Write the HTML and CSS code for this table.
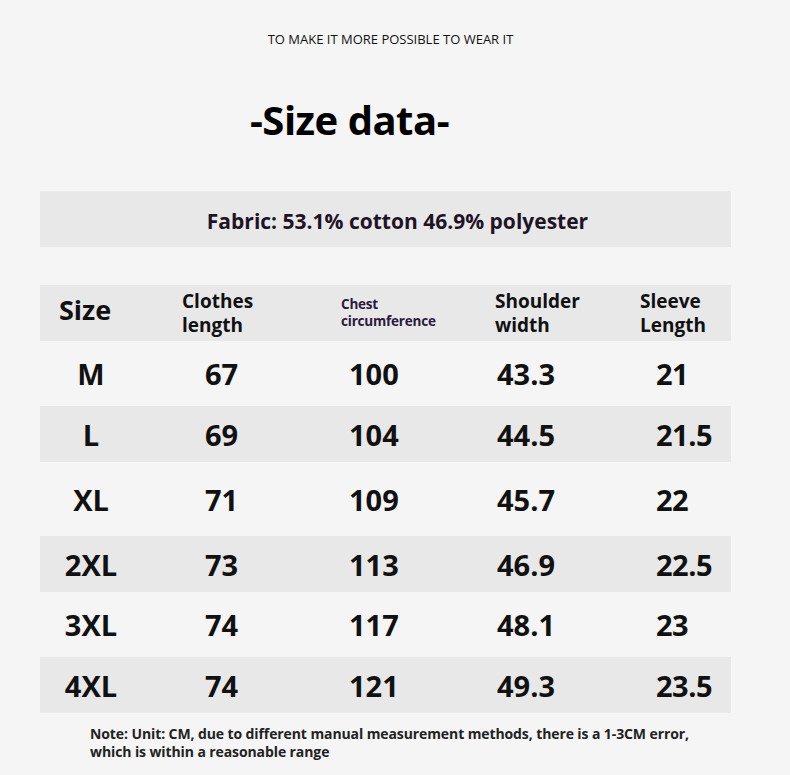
FILE: index.html
```html
<!DOCTYPE html>
<html lang="en">
<head>
<meta charset="utf-8">
<title>Size data</title>
<link rel="stylesheet" href="styles.css">
</head>
<body>
<div class="page">
  <p class="tagline">TO MAKE IT MORE POSSIBLE TO WEAR IT</p>
  <h1 class="title">-Size data-</h1>
  <div class="fabric">Fabric: 53.1% cotton 46.9% polyester</div>
  <div class="table">
    <div class="row head shade">
      <div class="c1 size-h">Size</div>
      <div class="c2 h2">Clothes<br>length</div>
      <div class="c3 h3 chest">Chest<br>circumference</div>
      <div class="c4 h4">Shoulder<br>width</div>
      <div class="c5 h5">Sleeve<br>Length</div>
    </div>
    <div class="row mid">
      <div class="c1">M</div><div class="c2 d2">67</div><div class="c3 d3">100</div><div class="c4 d4">43.3</div><div class="c5 d5">21</div>
    </div>
    <div class="row shade">
      <div class="c1">L</div><div class="c2 d2">69</div><div class="c3 d3">104</div><div class="c4 d4">44.5</div><div class="c5 d5">21.5</div>
    </div>
    <div class="row tall">
      <div class="c1">XL</div><div class="c2 d2">71</div><div class="c3 d3">109</div><div class="c4 d4">45.7</div><div class="c5 d5">22</div>
    </div>
    <div class="row shade">
      <div class="c1">2XL</div><div class="c2 d2">73</div><div class="c3 d3">113</div><div class="c4 d4">46.9</div><div class="c5 d5">22.5</div>
    </div>
    <div class="row mid">
      <div class="c1">3XL</div><div class="c2 d2">74</div><div class="c3 d3">117</div><div class="c4 d4">48.1</div><div class="c5 d5">23</div>
    </div>
    <div class="row shade">
      <div class="c1">4XL</div><div class="c2 d2">74</div><div class="c3 d3">121</div><div class="c4 d4">49.3</div><div class="c5 d5">23.5</div>
    </div>
  </div>
  <p class="note">Note: Unit: CM, due to different manual measurement methods, there is a 1-3CM error,<br>which is within a reasonable range</p>
</div>
</body>
</html>
```
FILE: styles.css
```css
html, body {
  margin: 0;
  padding: 0;
  background: #f5f5f5;
}
body {
  font-family: "Open Sans", "Noto Sans", sans-serif;
  color: #111;
}
.page {
  width: 790px;
  height: 775px;
  padding: 0 59px 0 40px;
  box-sizing: border-box;
  overflow: hidden;
}
.tagline {
  margin: 30px 0 0;
  text-align: center;
  font-size: 13px;
  line-height: 18px;
  letter-spacing: 0;
  color: #111;
  transform: translateX(5px);
}
.title {
  margin: 47px 0 0 210px;
  font-size: 40px;
  line-height: 50px;
  font-weight: 700;
  letter-spacing: -0.5px;
  color: #000;
}
.fabric {
  margin-top: 46px;
  height: 56px;
  background: #e8e8e8;
  display: flex;
  align-items: center;
  justify-content: center;
  font-size: 21px;
  font-weight: 700;
  letter-spacing: 0;
  color: #1f1426;
  padding-left: 24px;
  padding-top: 3px;
  box-sizing: border-box;
}
.table {
  margin-top: 38px;
}
.row {
  display: grid;
  grid-template-columns: 102px 188px 150px 150px 101px;
  align-items: center;
  height: 62px;
  font-size: 29px;
  font-weight: 700;
  color: #111;
}
.row.shade { height: 56px; background: #e8e8e8; }
.row.mid { height: 65px; }
.row.tall { height: 74px; }
.c1 { text-align: center; }
.d2 { padding-left: 63px; }
.d3 { padding-left: 19px; }
.d4 { padding-left: 17px; }
.d5 { padding-left: 26px; letter-spacing: -0.5px; }
.head { font-size: 19px; line-height: 24px; }
.size-h { font-size: 27px; padding-right: 12px; padding-bottom: 6px; }
.h2 { padding-left: 40px; }
.h3 { padding-left: 11px; }
.h4 { padding-left: 15px; }
.h5 { padding-left: 10px; }
.chest {
  font-size: 13.5px;
  line-height: 17px;
  color: #2b1a40;
  letter-spacing: -0.2px;
}
.note {
  margin: 12px 0 0 50px;
  font-size: 14px;
  line-height: 18px;
  font-weight: 700;
  letter-spacing: -0.1px;
  color: #222;
}
```
